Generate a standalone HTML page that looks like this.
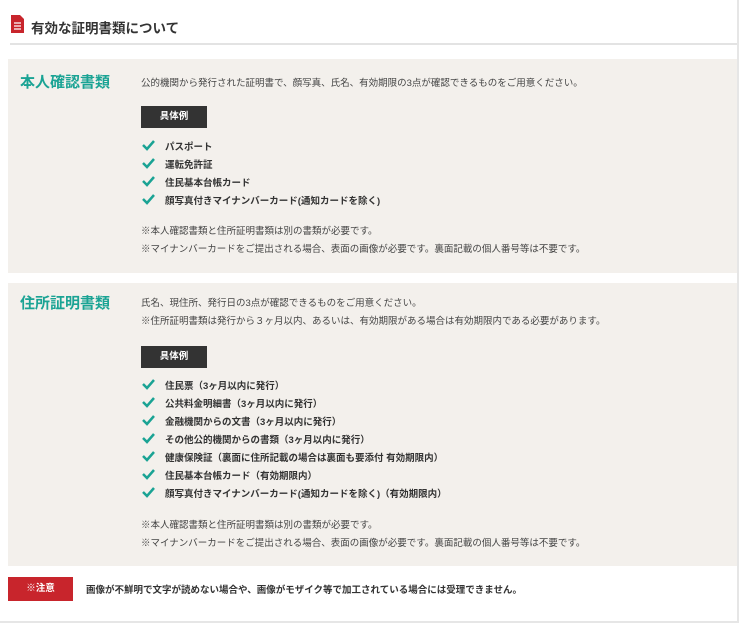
<!DOCTYPE html><html><head><meta charset="utf-8"><style>
body{margin:0;width:748px;height:626px;background:#fff;font-family:"Liberation Sans","Noto Sans CJK JP",sans-serif;color:#333;position:relative;overflow:hidden}
.a{position:absolute;white-space:nowrap}
.frame{position:absolute;left:0;top:0;width:737px;height:621px;border-right:2px solid #e6e6e6;border-bottom:2px solid #e6e6e6}
.box{position:absolute;left:8px;width:729px;background:#f3f0ec}
.h{color:#1aa394;font-weight:bold;font-size:15px}
.t{font-size:9.5px;color:#444}
.btn{position:absolute;background:#333;color:#fff;font-size:9.5px;font-weight:bold;width:66px;height:22px;line-height:22px;text-align:center}
.li{position:absolute;font-size:9.5px;font-weight:bold;color:#333;white-space:nowrap}
.li svg{position:absolute;left:-24px;top:0}
</style></head><body>
<div class="frame"></div>
<svg class="a" style="left:10px;top:14px" width="15" height="20" viewBox="0 0 15 20"><path d="M1 1h9l4 4v14H1z" fill="#c8252c"/><path d="M4 9h7M4 12h7M4 15h7" stroke="#fff" stroke-width="1.3"/></svg>
<div class="a" style="left:31px;top:17px;font-size:13.5px;font-weight:bold;color:#333">有効な証明書類について</div>
<div class="a" style="left:10px;top:43px;width:727px;height:2px;background:#e3e3e3"></div>

<div class="box" style="top:59px;height:214px"></div>
<div class="a h" style="left:20px;top:71px">本人確認書類</div>
<div class="a t" style="left:141px;top:75px">公的機関から発行された証明書で、顔写真、氏名、有効期限の3点が確認できるものをご用意ください。</div>
<div class="btn" style="left:141px;top:106px">具体例</div>
<div class="li" style="left:165px;top:139px"><svg width="14" height="12"><path d="M2 6l4 4 7-8" stroke="#1aa394" stroke-width="2.5" fill="none"/></svg>パスポート</div>
<div class="li" style="left:165px;top:157px"><svg width="14" height="12"><path d="M2 6l4 4 7-8" stroke="#1aa394" stroke-width="2.5" fill="none"/></svg>運転免許証</div>
<div class="li" style="left:165px;top:175px"><svg width="14" height="12"><path d="M2 6l4 4 7-8" stroke="#1aa394" stroke-width="2.5" fill="none"/></svg>住民基本台帳カード</div>
<div class="li" style="left:165px;top:193px"><svg width="14" height="12"><path d="M2 6l4 4 7-8" stroke="#1aa394" stroke-width="2.5" fill="none"/></svg>顔写真付きマイナンバーカード(通知カードを除く)</div>
<div class="a t" style="left:141px;top:223px">※本人確認書類と住所証明書類は別の書類が必要です。</div>
<div class="a t" style="left:141px;top:241px">※マイナンバーカードをご提出される場合、表面の画像が必要です。裏面記載の個人番号等は不要です。</div>

<div class="box" style="top:283px;height:283px"></div>
<div class="a h" style="left:20px;top:292px">住所証明書類</div>
<div class="a t" style="left:141px;top:295px">氏名、現住所、発行日の3点が確認できるものをご用意ください。</div>
<div class="a t" style="left:141px;top:313px">※住所証明書類は発行から３ヶ月以内、あるいは、有効期限がある場合は有効期限内である必要があります。</div>
<div class="btn" style="left:141px;top:346px">具体例</div>
<div class="li" style="left:165px;top:378px"><svg width="14" height="12"><path d="M2 6l4 4 7-8" stroke="#1aa394" stroke-width="2.5" fill="none"/></svg>住民票（3ヶ月以内に発行）</div>
<div class="li" style="left:165px;top:396px"><svg width="14" height="12"><path d="M2 6l4 4 7-8" stroke="#1aa394" stroke-width="2.5" fill="none"/></svg>公共料金明細書（3ヶ月以内に発行）</div>
<div class="li" style="left:165px;top:414px"><svg width="14" height="12"><path d="M2 6l4 4 7-8" stroke="#1aa394" stroke-width="2.5" fill="none"/></svg>金融機関からの文書（3ヶ月以内に発行）</div>
<div class="li" style="left:165px;top:432px"><svg width="14" height="12"><path d="M2 6l4 4 7-8" stroke="#1aa394" stroke-width="2.5" fill="none"/></svg>その他公的機関からの書類（3ヶ月以内に発行）</div>
<div class="li" style="left:165px;top:450px"><svg width="14" height="12"><path d="M2 6l4 4 7-8" stroke="#1aa394" stroke-width="2.5" fill="none"/></svg>健康保険証（裏面に住所記載の場合は裏面も要添付 有効期限内）</div>
<div class="li" style="left:165px;top:468px"><svg width="14" height="12"><path d="M2 6l4 4 7-8" stroke="#1aa394" stroke-width="2.5" fill="none"/></svg>住民基本台帳カード（有効期限内）</div>
<div class="li" style="left:165px;top:486px"><svg width="14" height="12"><path d="M2 6l4 4 7-8" stroke="#1aa394" stroke-width="2.5" fill="none"/></svg>顔写真付きマイナンバーカード(通知カードを除く)（有効期限内）</div>
<div class="a t" style="left:141px;top:517px">※本人確認書類と住所証明書類は別の書類が必要です。</div>
<div class="a t" style="left:141px;top:535px">※マイナンバーカードをご提出される場合、表面の画像が必要です。裏面記載の個人番号等は不要です。</div>

<div class="a" style="left:8px;top:577px;width:65px;height:24px;line-height:24px;background:#c8252c;color:#fff;font-size:9.5px;font-weight:bold;text-align:center">※注意</div>
<div class="a" style="left:86px;top:582px;font-size:9.5px;font-weight:bold;color:#333">画像が不鮮明で文字が読めない場合や、画像がモザイク等で加工されている場合には受理できません。</div>
</body></html>
